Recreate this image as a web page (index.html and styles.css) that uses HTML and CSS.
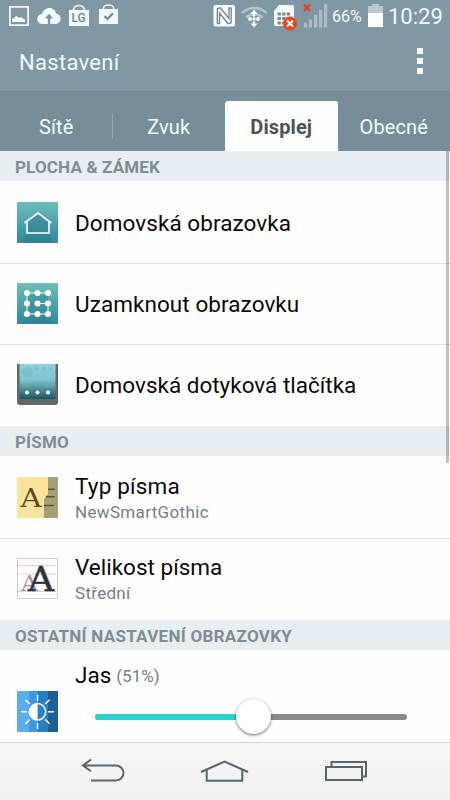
FILE: index.html
```html
<!DOCTYPE html>
<html lang="cs">
<head>
<meta charset="utf-8">
<title>Nastavení</title>
<link rel="stylesheet" href="styles.css">
</head>
<body>
<div class="phone">
  <header class="top">
    <div class="status">
      <svg class="status-left" width="130" height="33" viewBox="0 0 130 33" fill="#f3f9fb">
        <path d="M9 6h20v20H9zM10.800 7.800v16.400h16.400V7.800z" fill-rule="evenodd"/>
        <path d="M12 22v-3l2-1 2-2 2 1 1 1 2-1 2 1.500 2 1V22z"/>
        <path d="M42.500 24a5 5 0 0 1-.5-10C43 10.500 46 8 49.500 8c3.500 0 6 2.500 6.800 5.500A5.300 5.300 0 0 1 55 24h-4.800v-5.500h3L49 13.800l-4.200 4.700h3V24z"/>
        <path d="M69 10h20v16H69z"/><path d="M73.500 11v-1a5.500 4.500 0 0 1 11 0v1" fill="none" stroke="#f3f9fb" stroke-width="1.500"/>
        <text class="lg" x="71.500" y="22.300">LG</text>
        <path d="M99 9h19v15H99z"/><path d="M103.500 9.500V8a5 3 0 0 1 10 0v1.500" fill="none" stroke="#f3f9fb" stroke-width="1.500"/>
        <path d="m104.500 16 3 3 5.500-5.800" fill="none" stroke="#718894" stroke-width="2.200"/>
      </svg>
      <svg class="status-right" width="118" height="33" viewBox="212 0 118 33">
        <rect x="213.500" y="5" width="21.500" height="21.500" rx="2" fill="#f7fbfc"/>
        <path d="M217 23.500h2.500V13l8.500 10.500M231.500 8H229v10.500L220.500 8M217.300 23.500V10q0-2 2.200-2h1.500M231.200 8v13.500q0 2-2.200 2h-1.500" fill="none" stroke="#7b8b93" stroke-width="1.400"/>
        <g fill="none" stroke="#b5c3ca" stroke-width="2.600"><path d="M242 13c7-6.600 17.500-6.600 24.500 0"/><path d="M246 17.500c5-4.500 11.500-4.500 16.500 0"/></g>
        <g fill="#fff"><path d="m254 9.500 3.500 4.500h-7zM254 27.500l-3.500-4h7z"/><circle cx="254" cy="15.500" r="1.300"/><circle cx="250" cy="19" r="1.900"/><circle cx="254" cy="19" r="1.700"/><circle cx="258" cy="19" r="1.900"/><circle cx="254" cy="22.500" r="1.300"/></g>
        <path d="M274 11l5-6h13q2 0 2 2v19h-18q-2 0-2-2z" fill="#f7fbfc"/>
        <path d="M277.500 14h13M277.500 18.500h13M277.500 23h8" stroke="#788991" stroke-width="3" stroke-dasharray="3.400 1.200"/>
        <circle cx="290" cy="23.500" r="7" fill="#ed461c"/><path d="m287 20.500 6 6m0-6-6 6" stroke="#fff" stroke-width="2"/>
        <path d="M304 22.500h3v5h-3zM309 19.500h3v8h-3zM314 15h3.200v12.500H314zM319 10h3.200v17.500H319zM324 4h3.200v23.500H324z" fill="#aebdc4"/>
        <path d="m304 4.500 6 6.500m0-6.500-6 6.500" stroke="#df4324" stroke-width="2.400"/>
      </svg>
      <span class="percent">66%</span>
      <svg class="battery" width="15" height="23" viewBox="0 0 15 23"><path d="M0 2h4V0h7v2h4v7H0z" fill="#b9c7ce"/><path d="M0 9h15v14H0z" fill="#fff"/></svg>
      <time class="clock">10:29</time>
    </div>
    <div class="title-row">
      <h1>Nastavení</h1>
      <div class="more"><i></i><i></i><i></i></div>
    </div>
  </header>

  <nav class="tabs">
    <span class="tab divided"><b>Sítě</b></span>
    <span class="tab"><b>Zvuk</b></span>
    <span class="tab active"><b>Displej</b></span>
    <span class="tab"><b>Obecné</b></span>
  </nav>

  <main class="content">
    <h2 class="h-home">PLOCHA &amp; ZÁMEK</h2>
    <div class="row first">
      <svg class="icon" viewBox="0 0 41 41">
        <defs><linearGradient id="teal" x2="0" y2="1"><stop stop-color="#6dbdb9"/><stop offset="1" stop-color="#33899c"/></linearGradient></defs>
        <path d="M0 0h41v41H0z" fill="url(#teal)"/><path d="M10 20v11L5 41h31l-4-10V19L21 11z" fill="#247888" opacity=".42"/>
        <path d="M7.500 21 21 11l13.300 10M10 19.500V31h22V19.500" fill="none" stroke="#fff" stroke-width="1.600"/>
      </svg>
      <span class="name wide">Domovská obrazovka</span>
    </div>
    <div class="row">
      <svg class="icon" viewBox="0 0 41 41">
        <path d="M0 0h41v41H0z" fill="url(#teal)"/><path d="M10 10h21v21l5 10H5l5-10z" fill="#247888" opacity=".3"/>
        <path d="M31 10H10v21h21V20.500H20.500" fill="none" stroke="#fff" stroke-width="1"/>
        <g fill="#fff"><circle cx="10" cy="10" r="3"/><circle cx="20.500" cy="10" r="3"/><circle cx="31" cy="10" r="3"/><circle cx="10" cy="20.500" r="3"/><circle cx="20.500" cy="20.500" r="3"/><circle cx="31" cy="20.500" r="3"/><circle cx="10" cy="31" r="3"/><circle cx="20.500" cy="31" r="3"/><circle cx="31" cy="31" r="3"/></g>
      </svg>
      <span class="name wide">Uzamknout obrazovku</span>
    </div>
    <div class="row last">
      <svg class="icon" viewBox="0 0 41 41">
        <defs><linearGradient id="screen" x2="0" y2="1"><stop stop-color="#8ed2de"/><stop offset=".45" stop-color="#82c4cf"/><stop offset="1" stop-color="#1d5461"/></linearGradient></defs>
        <path d="M0 0h41v38q0 3-3 3H3q-3 0-3-3z" fill="#62676a"/><path d="M2.500 0h36v35h-36z" fill="url(#screen)"/>
        <circle cx="10.500" cy="8" r="5.500" fill="#70bdcb" opacity=".7"/>
        <path d="M18 5h18M6 21h30" stroke="#5aa8b7" stroke-width="3.500" stroke-dasharray="3.500 3.500" opacity=".4"/>
        <g fill="#fff"><circle cx="10" cy="28.500" r="2"/><circle cx="20.500" cy="28.500" r="2"/><circle cx="31" cy="28.500" r="2"/></g>
      </svg>
      <span class="name">Domovská dotyková tlačítka</span>
    </div>

    <h2 class="h-font">PÍSMO</h2>
    <div class="row first">
      <svg class="icon" viewBox="0 0 41 41">
        <path d="M0 0h41v41H0z" fill="#fae39b"/><path d="M31 0h10v41H27V22l4-5z" fill="#a5a079"/>
        <text class="serif" x="3.500" y="29.500" font-size="26" textLength="21" lengthAdjust="spacingAndGlyphs" fill="#5d4b27">A</text>
        <path d="M31 12.300h7M29 19.800h9M27 28.500h10" stroke="#5d533a" stroke-width="1.600"/>
      </svg>
      <span class="pair"><span class="name typ">Typ písma</span><span class="sub font-name">NewSmartGothic</span></span>
    </div>
    <div class="row last">
      <svg class="icon" viewBox="0 0 41 41">
        <path d="M.5.500h40v40H.5z" fill="#fff" stroke="#cdcbd0"/>
        <path d="M0 7.500h41M0 16h41M0 33.500h41" stroke="#e68fae" stroke-width=".8" stroke-dasharray="1.500 1"/>
        <text class="serif" x="4" y="33" font-size="23" textLength="17" lengthAdjust="spacingAndGlyphs" fill="#9c9ca0">A</text>
        <text class="serif heavy" x="11" y="33" font-size="34" textLength="26" lengthAdjust="spacingAndGlyphs" fill="#2c323e">A</text>
      </svg>
      <span class="pair"><span class="name">Velikost písma</span><span class="sub size-name">Střední</span></span>
    </div>

    <h2 class="h-other">OSTATNÍ NASTAVENÍ OBRAZOVKY</h2>
    <div class="row brightness">
      <svg class="icon" viewBox="0 0 41 41">
        <path d="M0 0h12v41H0z" fill="#5baeea"/><path d="M12 0h9v41h-9z" fill="#3b99e0"/><path d="M21 0h10v41H21z" fill="#2b80c1"/><path d="M31 0h10v41H31z" fill="#1d5e96"/>
        <circle cx="20.500" cy="20.800" r="8.200" fill="none" stroke="#fff" stroke-width="1.500"/><path d="M20.500 12.500a8.300 8.300 0 0 0 0 16.600z" fill="#fff"/>
        <path d="M20.500 4v6M20.500 32v6M4 20.800h6M31 20.800h6M8.500 8.800l4.300 4.300M28.300 28.500l4.300 4.300M32.500 8.800l-4.300 4.300M12.800 28.500l-4.300 4.300" stroke="#fff" stroke-width="1.400"/>
      </svg>
      <div class="bright-body">
        <div class="bright-label"><span class="name">Jas</span><span class="sub level">(51%)</span></div>
        <div class="track"><div class="fill"></div><div class="knob"></div></div>
      </div>
    </div>
    <div class="scrollbar"></div>
  </main>

  <footer class="navbar">
    <svg width="450" height="57" viewBox="0 743 450 57" fill="none" stroke="#59646b" stroke-width="2">
      <path d="M83 765.500h33a7.500 7.500 0 0 1 0 15H91M91 759.500l-8 6 8 5.800"/>
      <path d="M201 772l23.500-10.500L248 772M206.700 769.500v11.300h35.600v-11.300"/>
      <path d="M326 767h36v13h-36zM331.500 767v-5H366v14.500h-4"/>
    </svg>
  </footer>
</div>
</body>
</html>
```
FILE: styles.css
```css
* { box-sizing: border-box; }
body { margin: 0; font-family: Roboto, "Noto Sans", sans-serif; background: #fefefe; }
h1, h2 { margin: 0; }
.phone { width: 450px; height: 800px; display: flex; flex-direction: column; overflow: hidden; white-space: nowrap; }
.top { height: 91px; background: #8097a4; color: #f1f8fb; }
.status { height: 33px; display: flex; align-items: flex-start; }
.status svg { display: block; flex: none; }
.status-right { margin-left: 82px; }
.lg { font: 500 12px Roboto, sans-serif; fill: #718894; }
.percent { font-size: 16px; line-height: 33px; margin-left: 2px; width: 36px; }
.status .battery { margin-top: 4px; }
.clock { font-size: 22px; line-height: 33px; margin-left: 5px; }
.title-row { height: 58px; display: flex; justify-content: space-between; padding: 0 27px 0 19px; }
h1 { font-size: 22px; font-weight: 400; line-height: 60px; letter-spacing: .3px; }
.more { display: flex; flex-direction: column; gap: 4px; padding-top: 15px; }
.more i { width: 6px; height: 6px; background: #f7fcfd; }
.tabs { height: 60px; flex: none; background: #778e98; border-top: 1px solid #72868f; display: grid; grid-template-columns: repeat(4, 1fr); padding-top: 9px; color: #f2f9fb; }
.tab { font-size: 20px; line-height: 52px; text-align: center; position: relative; letter-spacing: .1px; }
.tab b { font-weight: 400; }
.divided::after { content: ""; position: absolute; right: 0; top: 13px; width: 1px; height: 25px; background: #95a8b1; }
.active { background: #fefefe; color: #46545c; border-radius: 3px 3px 0 0; }
.active b { font-weight: 700; }
.content { height: 591px; flex: none; position: relative; background: #fefefe; }
h2 { height: 30px; padding-left: 15px; background: #e8eff3; color: #828c92; font-size: 17px; font-weight: 700; line-height: 33px; letter-spacing: .16px; }
.h-other { letter-spacing: .29px; }
.row { height: 81px; display: flex; align-items: flex-start; padding: 19px 0 0 17px; border-bottom: 1px solid #dedede; }
.row.first { height: 83px; padding-top: 21px; }
.row.last { border-bottom: 0; }
.icon { width: 41px; height: 41px; flex: none; margin-right: 17px; display: block; }
.name { font-size: 22.5px; line-height: 28px; color: #0a0a0a; padding-top: 7px; }
.wide { letter-spacing: .07px; }
.typ { letter-spacing: .18px; }
.pair { display: flex; flex-direction: column; margin-top: -5px; }
.pair .name { padding-top: 0; }
.sub { color: #727d84; font-size: 17px; line-height: 25px; }
.font-name { letter-spacing: .34px; }
.size-name { letter-spacing: .3px; }
.serif { font-family: "DejaVu Serif", serif; }
.heavy { stroke: #2c323e; stroke-width: .6px; }
.row.brightness { height: 92px; padding-top: 0; border-bottom: 0; }
.brightness .icon { margin-top: 41px; }
.bright-body { flex: 1; }
.bright-label { display: flex; height: 56px; padding-top: 11px; }
.bright-label .name { padding-top: 0; }
.level { margin-left: 5px; line-height: 30px; }
.track { margin: 8px 43px 0 20px; height: 6px; border-radius: 3px; background: #8a8a8a; position: relative; }
.fill { height: 6px; width: 51%; background: #27d5d0; border-radius: 3px 0 0 3px; }
.knob { position: absolute; left: 141px; top: -15px; width: 35px; height: 35px; border-radius: 50%; background: #fff; box-shadow: 0 1px 3px rgba(0,0,0,.6); }
.scrollbar { position: absolute; right: 1px; top: 0; width: 3px; height: 312px; background: rgba(100,100,100,.4); border-radius: 0 0 2px 2px; }
.navbar { height: 58px; flex: none; border-top: 1px solid #d0d1d2; background: linear-gradient(#f7f7f7, #f0f0f0); }
.navbar svg { display: block; }
```
